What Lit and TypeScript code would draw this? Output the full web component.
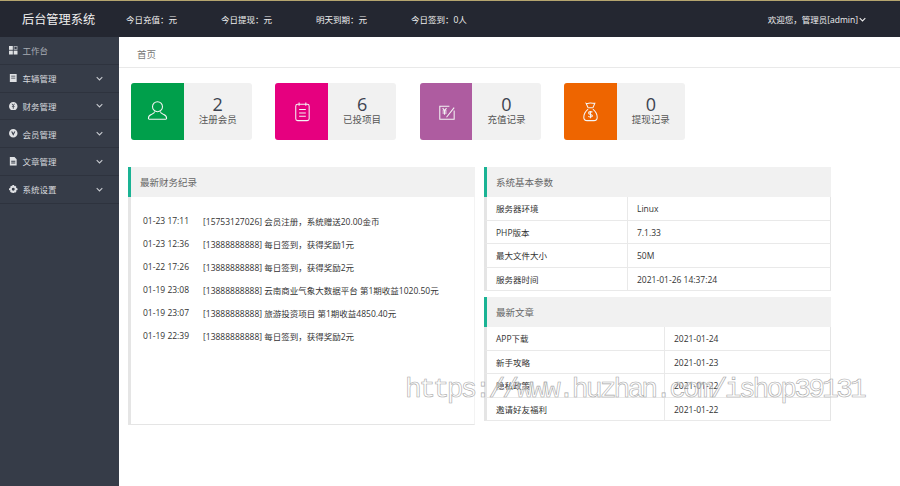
import { LitElement, html, css, svg } from 'lit';
import { customElement } from 'lit/decorators.js';

const chevron = html`<svg class="chev" viewBox="0 0 10 6"><path d="M1 1l4 4 4-4" fill="none" stroke="currentColor" stroke-width="1.5"/></svg>`;

const navIcons = {
  grid: svg`<rect x="0" y="0" width="4.5" height="4.5"/><rect x="0" y="5.5" width="4.5" height="4.5"/><rect x="5.5" y="5.5" width="4.5" height="4.5"/><rect x="6" y=".5" width="3.5" height="3.5" fill="none" stroke="currentColor"/>`,
  book: svg`<path fill-rule="evenodd" d="M1 0h8v10H1zM2.6 2v1h4.8V2zm0 2.4v1h4.8v-1z"/>`,
  coin: svg`<path fill-rule="evenodd" d="M5 0a5 5 0 1 1 0 10A5 5 0 0 1 5 0zM3 2l2 3 2-3H6L5 3.6 4 2zM3.4 5v1h1.1v2h1V6h1.1V5z"/>`,
  shield: svg`<path fill-rule="evenodd" d="M5 0a5 5 0 1 1 0 10A5 5 0 0 1 5 0zM2.5 3L5 8l2.500-5H6L5 5.200 4 3z"/>`,
  file: svg`<path fill-rule="evenodd" d="M1 0h5.500L9 2.500V10H1zM2.600 4.500v1h4.800v-1zm0 2v1h4.800v-1z"/>`,
  gear: svg`<path fill-rule="evenodd" d="M4 0h2l.3 1.500 1-.5L8.800 2.300l-.7 1L10 4v2l-1.900.7.7 1L7.300 9l-1-.5L6 10H4l-.3-1.500-1 .5L1.200 7.700l.7-1L0 6V4l1.900-.7-.7-1L2.700 1l1 .5zM5 3.300a1.700 1.700 0 1 0 0 3.400 1.700 1.700 0 0 0 0-3.400z"/>`,
};

const navItems = [
  { label: '工作台', icon: navIcons.grid, sub: false },
  { label: '车辆管理', icon: navIcons.book, sub: true },
  { label: '财务管理', icon: navIcons.coin, sub: true },
  { label: '会员管理', icon: navIcons.shield, sub: true },
  { label: '文章管理', icon: navIcons.file, sub: true },
  { label: '系统设置', icon: navIcons.gear, sub: true },
];

const stats = ['今日充值：元', '今日提现：元', '明天到期：元', '今日签到：0人'];

const cards = [
  {
    num: '2', label: '注册会员', color: '#009f4b',
    icon: svg`<circle cx="12" cy="7" r="5.200"/><path d="M9 12c0 1.500-1 2-3 2.800C3.500 15.700 2.500 17 2.500 19c0 .6.400 1 1 1h17c.6 0 1-.4 1-1 0-2-1-3.300-3.500-4.200-2-.8-3-1.300-3-2.800"/>`,
  },
  {
    num: '6', label: '已投项目', color: '#e6007f',
    icon: svg`<rect x="6" y="4.500" width="14" height="17" rx="2"/><path d="M9.500 2.500v3.500M16.500 2.500v3.500M9.500 10h7M9.500 13.500h7M9.500 17h7"/>`,
  },
  {
    num: '0', label: '充值记录', color: '#ae5ca0',
    icon: svg`<path d="M15 6.500H5v13.500h15v-9"/><path d="M8 8.500l2 2.500 2-2.500M7.800 11.500h4.400M7.800 13.500h4.400M10 11v4.500M12 18L20 8"/>`,
  },
  {
    num: '0', label: '提现记录', color: '#ee6500',
    icon: svg`<path d="M9.500 8L7.500 3.500c1.500.8 3-.5 4.500-.3s3 .3 4.500.3L14.500 8"/><path d="M9.500 8h5M9.500 9.500C6.500 12 5 15 5 18c0 2.200 1 3.500 3.500 3.500h7c2.500 0 3.500-1.300 3.500-3.500 0-3-1.500-6-4.500-8.500"/><path d="M14 12.800c-.5-.8-4-1.200-4 .7 0 2 4 1.100 4 3 0 1.800-3.500 1.500-4.300.4M12 11.500v7.500"/>`,
  },
];

const logs = [
  ['01-23 17:11', '[15753127026] 会员注册，系统赠送20.00金币'],
  ['01-23 12:36', '[13888888888] 每日签到，获得奖励1元'],
  ['01-22 17:26', '[13888888888] 每日签到，获得奖励2元'],
  ['01-19 23:08', '[13888888888] 云南商业气象大数据平台 第1期收益1020.50元'],
  ['01-19 23:07', '[13888888888] 旅游投资项目 第1期收益4850.40元'],
  ['01-19 22:39', '[13888888888] 每日签到，获得奖励2元'],
];

const sysRows = [
  ['服务器环境', 'Linux'],
  ['PHP版本', '7.1.33'],
  ['最大文件大小', '50M'],
  ['服务器时间', '2021-01-26 14:37:24'],
];

const articles = [
  ['APP下载', '2021-01-24'],
  ['新手攻略', '2021-01-23'],
  ['隐私政策', '2021-01-22'],
  ['邀请好友福利', '2021-01-22'],
];

@customElement('app-root')
export class AppRoot extends LitElement {
  static styles = css`
    :host {
      display: block;
      position: relative;
      height: 486px;
      overflow: hidden;
      background: #fff;
      font-family: "Open Sans", "Noto Sans CJK SC", sans-serif;
      font-size: 8.5px;
      color: #333;
    }
    .topbar {
      height: 36px;
      border-top: 1px solid #b5a56f;
      background: #242731;
      color: #f0f0f0;
      display: flex;
      align-items: center;
    }
    .brand {
      width: 126px;
      padding-left: 22px;
      box-sizing: border-box;
      font-size: 12.2px;
      flex: none;
    }
    .stat { width: 95px; flex: none; }
    .user {
      margin-left: auto;
      margin-right: 34px;
      display: flex;
      align-items: center;
      gap: 1px;
    }
    .user .chev { width: 7px; height: 5px; color: #eee; }
    .body { display: flex; height: 449px; }
    .side { width: 119px; flex: none; background: #363c48; color: #d8dade; }
    .nav {
      height: 27.75px;
      box-sizing: border-box;
      border-bottom: 1px solid #2e333e;
      display: flex;
      align-items: center;
      padding-left: 9px;
    }
    .nav:first-child { color: #a9adb4; }
    .nav svg.ico { width: 8.5px; height: 8.5px; fill: #dfe1e4; margin-right: 5px; }
    .nav .chev { width: 7px; height: 5px; margin-left: auto; margin-right: 16px; color: #c8cbd0; }
    .main { flex: 1; min-width: 0; }
    .crumb {
      height: 26px;
      border-bottom: 1px solid #e9e9e9;
      padding: 4px 0 0 18px;
      display: flex;
      align-items: center;
      font-size: 9.5px;
      color: #777;
    }
    .cards {
      display: grid;
      grid-template-columns: repeat(4, 120.800px);
      column-gap: 23.600px;
      padding: 15px 0 0 12px;
    }
    .card {
      height: 57px;
      display: flex;
      background: #f1f1f1;
      border-radius: 3px;
      overflow: hidden;
    }
    .card .tile {
      width: 52.500px;
      display: flex;
      align-items: center;
      justify-content: center;
    }
    .tile svg {
      width: 23px;
      height: 23px;
      fill: none;
      stroke: #f4f4f4;
      stroke-width: 1.100;
    }
    .card .info {
      flex: 1;
      display: flex;
      flex-direction: column;
      align-items: center;
      justify-content: center;
      color: #555;
      font-size: 9.500px;
      line-height: 12px;
      padding-bottom: 2px;
    }
    .card .num { font-size: 18px; line-height: 19px; color: #3d4350; }
    .panels {
      display: grid;
      grid-template-columns: 347px 347px;
      column-gap: 9px;
      padding: 27px 0 0 9px;
    }
    .col { display: flex; flex-direction: column; gap: 6px; }
    .head {
      height: 30px;
      box-sizing: border-box;
      border-left: 3px solid #1ab394;
      background: #f1f1f1;
      display: flex;
      align-items: center;
      padding-left: 9px;
      font-size: 9.500px;
      color: #666;
    }
    .log-box {
      height: 228px;
      box-sizing: border-box;
      border-left: 3px solid #e5e5e5;
      border-bottom: 1px solid #e5e5e5;
      border-right: 1px solid #f3f3f3;
      padding-top: 12px;
    }
    .log {
      height: 23px;
      display: flex;
      align-items: center;
      padding-left: 12px;
      color: #333;
    }
    .log .t { width: 60px; flex: none; }
    .row {
      display: grid;
      height: 23.500px;
      box-sizing: border-box;
      border-left: 3px solid #e5e5e5;
      border-right: 1px solid #e5e5e5;
      border-bottom: 1px solid #e9e9e9;
      align-items: center;
      color: #333;
    }
    .sys .row { grid-template-columns: 140px 1fr; }
    .art .row { grid-template-columns: 177px 1fr; }
    .row span { padding: 1px 0 0 9px; line-height: 21.500px; }
    .row span + span { border-left: 1px solid #e9e9e9; }
    .mark {
      position: absolute;
      left: 405px;
      top: 374px;
      font-family: "Liberation Mono", monospace;
      font-size: 28px;
      letter-spacing: -2.900px;
      white-space: nowrap;
      color: rgba(255, 255, 255, .35);
      -webkit-text-stroke: .6px #a9a9a9;
    }
  `;

  render() {
    return html`
      <div class="topbar">
        <div class="brand">后台管理系统</div>
        ${stats.map((s) => html`<div class="stat">${s}</div>`)}
        <div class="user">欢迎您，管理员[admin]${chevron}</div>
      </div>
      <div class="body">
        <div class="side">
          ${navItems.map((n) => html`
            <div class="nav">
              <svg class="ico" viewBox="0 0 10 10">${n.icon}</svg>
              <span>${n.label}</span>
              ${n.sub ? chevron : ''}
            </div>`)}
        </div>
        <div class="main">
          <div class="crumb">首页</div>
          <div class="cards">
            ${cards.map((c) => html`
              <div class="card">
                <div class="tile" style="background:${c.color}">
                  <svg viewBox="0 0 24 24">${c.icon}</svg>
                </div>
                <div class="info">
                  <div class="num">${c.num}</div>
                  <div>${c.label}</div>
                </div>
              </div>`)}
          </div>
          <div class="panels">
            <div class="col">
              <div>
                <div class="head">最新财务纪录</div>
                <div class="log-box">
                  ${logs.map((l) => html`<div class="log"><span class="t">${l[0]}</span><span>${l[1]}</span></div>`)}
                </div>
              </div>
            </div>
            <div class="col">
              <div class="sys">
                <div class="head">系统基本参数</div>
                ${sysRows.map((r) => html`<div class="row"><span>${r[0]}</span><span>${r[1]}</span></div>`)}
              </div>
              <div class="art">
                <div class="head">最新文章</div>
                ${articles.map((r) => html`<div class="row"><span>${r[0]}</span><span>${r[1]}</span></div>`)}
              </div>
            </div>
          </div>
        </div>
      </div>
      <div class="mark">https://www.huzhan.com/ishop39131</div>
    `;
  }
}
